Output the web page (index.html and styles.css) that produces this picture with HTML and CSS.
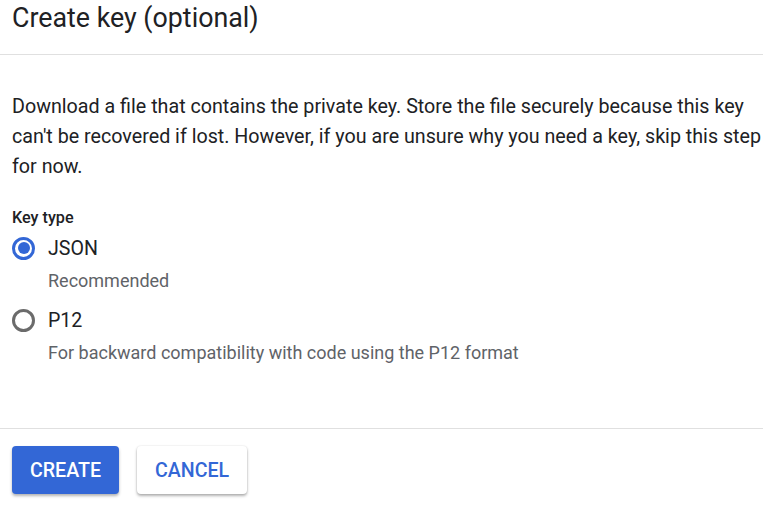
FILE: index.html
```html
<!DOCTYPE html>
<html>
<head>
<meta charset="utf-8">
<link rel="stylesheet" href="styles.css">
</head>
<body>
<div class="dialog">
  <div class="header">
    <h1 class="title">Create key (optional)</h1>
  </div>
  <div class="content">
    <p class="desc">Download a file that contains the private key. Store the file securely because this key can't be recovered if lost. However, if you are unsure why you need a key, skip this step for now.</p>
    <div class="label">Key type</div>
    <div class="option">
      <span class="radio checked"><span class="dot"></span></span>
      <span class="opt-text">JSON</span>
    </div>
    <div class="hint">Recommended</div>
    <div class="option second">
      <span class="radio"></span>
      <span class="opt-text">P12</span>
    </div>
    <div class="hint">For backward compatibility with code using the P12 format</div>
  </div>
  <div class="actions">
    <button class="btn primary">CREATE</button>
    <button class="btn secondary">CANCEL</button>
  </div>
</div>
</body>
</html>
```
FILE: styles.css
```css
html, body {
  margin: 0;
  padding: 0;
  background: #ffffff;
}
body {
  font-family: Roboto, "Liberation Sans", Arial, sans-serif;
  color: #202124;
  width: 763px;
  height: 508px;
  overflow: hidden;
}
.header {
  padding: 0 12px 18px 12px;
  border-bottom: 1px solid #e0e0e0;
}
.title {
  margin: 0;
  font-size: 26.8px;
  line-height: 36px;
  font-weight: 400;
  color: #202124;
}
.content {
  padding: 37px 0 65px 12px;
}
.desc {
  margin: 0;
  font-size: 19.7px;
  line-height: 30px;
  color: #202124;
}
.label {
  margin-top: 26px;
  font-size: 16.2px;
  line-height: 20px;
  font-weight: 500;
  color: #202124;
}
.option {
  margin-top: 8px;
  display: flex;
  align-items: center;
  height: 24px;
}
.option.second {
  margin-top: 17px;
}
.radio {
  box-sizing: border-box;
  width: 23px;
  height: 23px;
  border: 3px solid #6b6b6b;
  border-radius: 50%;
  display: flex;
  align-items: center;
  justify-content: center;
  flex: none;
}
.radio.checked {
  border-color: #3367d6;
}
.dot {
  width: 12px;
  height: 12px;
  border-radius: 50%;
  background: #3367d6;
}
.opt-text {
  margin-left: 13px;
  font-size: 19.6px;
  color: #202124;
}
.hint {
  margin-top: 11px;
  padding-left: 36px;
  font-size: 18px;
  line-height: 20px;
  color: #5f6368;
}
.actions {
  border-top: 1px solid #e0e0e0;
  padding: 17px 12px 0 12px;
  display: flex;
  gap: 18px;
}
.btn {
  font-family: Roboto, "Liberation Sans", Arial, sans-serif;
  font-size: 19.6px;
  font-weight: 500;
  height: 48px;
  padding: 0 18px;
  border-radius: 4px;
  border: none;
  cursor: pointer;
}
.primary {
  background: #3367d6;
  color: #ffffff;
  box-shadow: 0 2px 3px rgba(0,0,0,0.3);
}
.secondary {
  background: #ffffff;
  color: #3367d6;
  box-shadow: 0 2px 3px rgba(0,0,0,0.3), 0 0 2px rgba(0,0,0,0.12);
}
```
